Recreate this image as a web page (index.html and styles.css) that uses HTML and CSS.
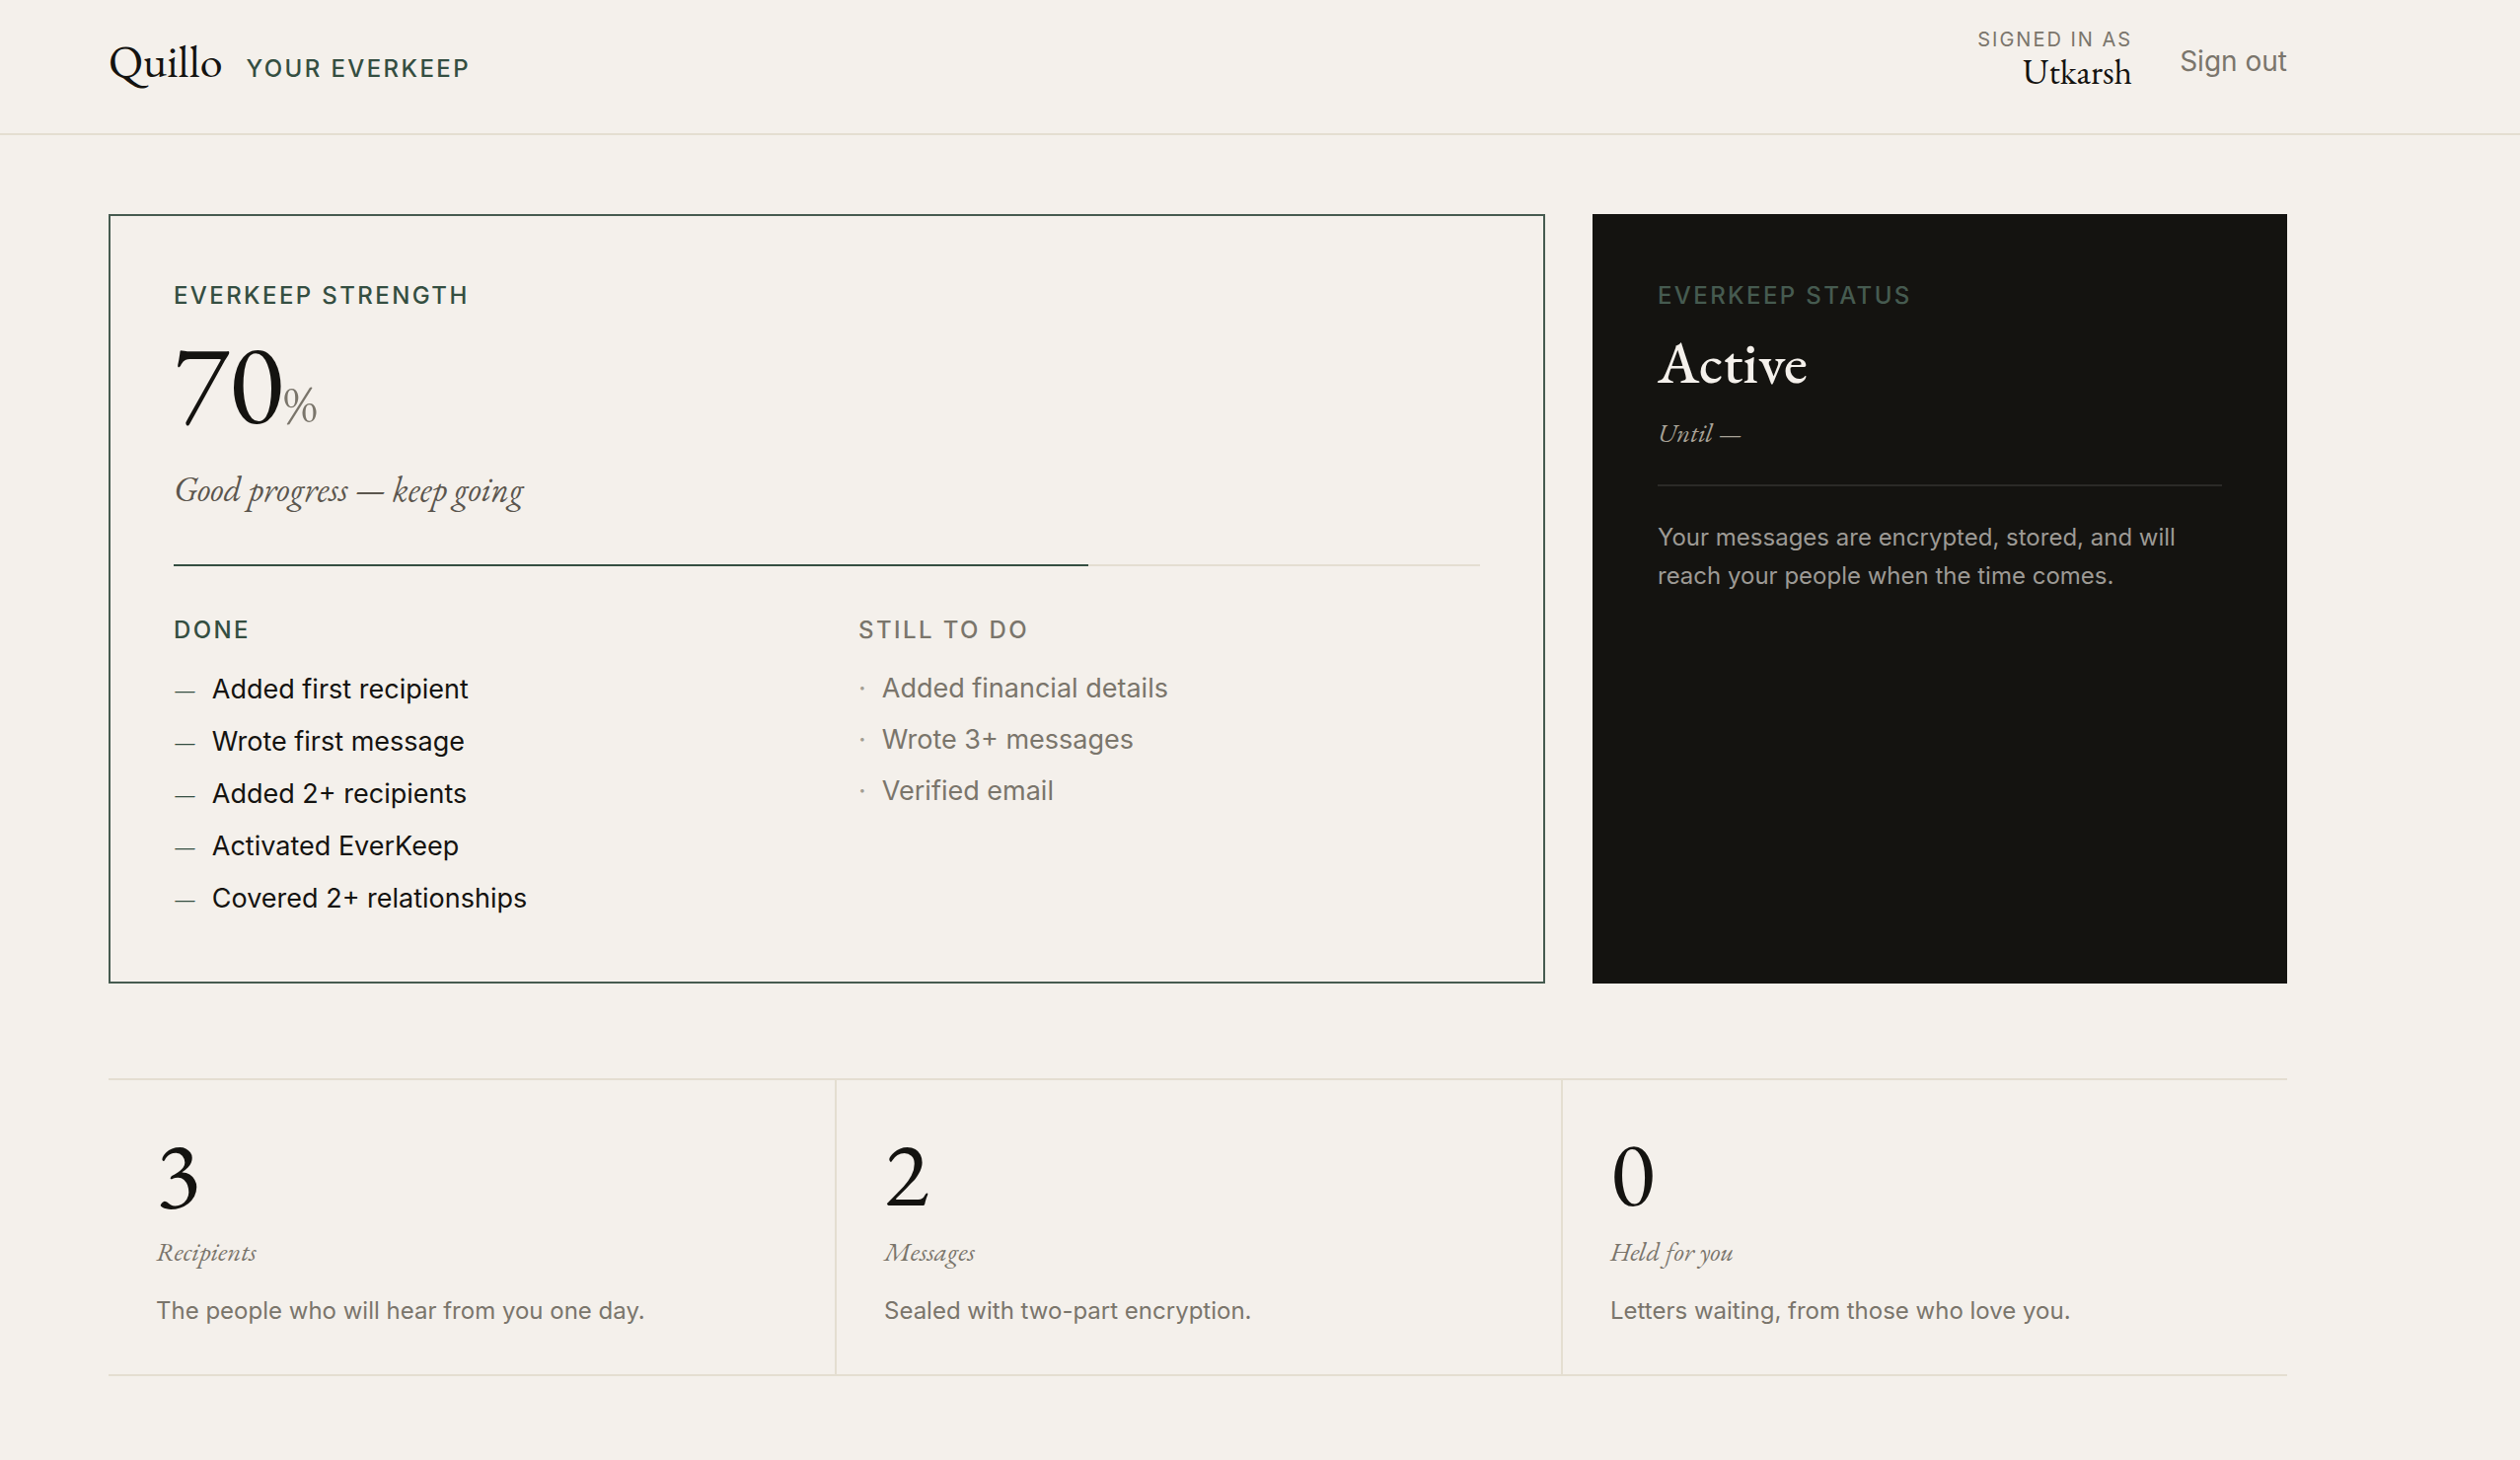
FILE: index.html
```html
<!DOCTYPE html>
<html lang="en">
<head>
    <meta charset="UTF-8">
    <meta name="viewport" content="width=device-width, initial-scale=1.0">
    <title>Quillo - Your EverKeep</title>
    <link rel="stylesheet" href="styles.css">
</head>
<body>
    <header class="site-header">
        <div class="container header-inner">
            <div class="brand">
                <a href="#" class="logo">Quillo</a>
                <span class="label">Your EverKeep</span>
            </div>
            <div class="account">
                <div class="user">
                    <span class="user-caption">Signed in as</span>
                    <span class="user-name">Utkarsh</span>
                </div>
                <button type="button" class="sign-out">Sign out</button>
            </div>
        </div>
    </header>

    <main class="container">
        <div class="overview">
            <section class="card strength">
                <h2 class="label">EverKeep strength</h2>
                <p class="score">70<span class="percent">%</span></p>
                <p class="progress-note">Good progress — keep going</p>
                <div class="bar"><div class="bar-fill" style="width: 70%"></div></div>
                <div class="checklists">
                    <div>
                        <h3 class="label">Done</h3>
                        <ul class="checklist done">
                            <li>Added first recipient</li>
                            <li>Wrote first message</li>
                            <li>Added 2+ recipients</li>
                            <li>Activated EverKeep</li>
                            <li>Covered 2+ relationships</li>
                        </ul>
                    </div>
                    <div>
                        <h3 class="label muted">Still to do</h3>
                        <ul class="checklist todo">
                            <li>Added financial details</li>
                            <li>Wrote 3+ messages</li>
                            <li>Verified email</li>
                        </ul>
                    </div>
                </div>
            </section>

            <section class="card status">
                <h2 class="label">EverKeep status</h2>
                <p class="status-value">Active</p>
                <p class="status-until">Until —</p>
                <p class="status-text">Your messages are encrypted, stored, and will reach your people when the time comes.</p>
            </section>
        </div>

        <section class="stats">
            <div class="stat">
                <p class="stat-number">3</p>
                <h3 class="stat-name">Recipients</h3>
                <p class="stat-text">The people who will hear from you one day.</p>
            </div>
            <div class="stat">
                <p class="stat-number">2</p>
                <h3 class="stat-name">Messages</h3>
                <p class="stat-text">Sealed with two-part encryption.</p>
            </div>
            <div class="stat">
                <p class="stat-number">0</p>
                <h3 class="stat-name">Held for you</h3>
                <p class="stat-text">Letters waiting, from those who love you.</p>
            </div>
        </section>
    </main>
</body>
</html>
```
FILE: styles.css
```css
:root {
    --paper: #f4f0eb;
    --ink: #141310;
    --muted: #7a756b;
    --green: #344e41;
    --line: #e4ded1;
    --serif: "EB Garamond", "Liberation Serif", serif;
    --sans: Inter, "Liberation Sans", sans-serif;
}

* {
    box-sizing: border-box;
}

body {
    margin: 0;
    background-color: var(--paper);
    color: var(--ink);
    font-family: var(--sans);
    font-size: 24px;
}

h2, h3, p, ul {
    margin: 0;
    padding: 0;
    font-weight: 400;
}

.container {
    max-width: 2208px;
    margin: 0 110px;
}

.label {
    color: var(--green);
    font-size: 24px;
    font-weight: 500;
    line-height: 34px;
    letter-spacing: 0.1em;
    text-transform: uppercase;
}

.label.muted {
    color: var(--muted);
}

/* header */
.site-header {
    padding: 25px 0 36px;
    border-bottom: 2px solid var(--line);
}

.header-inner {
    display: flex;
    justify-content: space-between;
    align-items: center;
}

.brand {
    display: flex;
    align-items: baseline;
    gap: 24px;
}

.logo {
    color: var(--ink);
    font-family: var(--serif);
    font-size: 46px;
    text-decoration: none;
}

.account {
    display: flex;
    align-items: center;
    gap: 48px;
}

.user {
    display: flex;
    flex-direction: column;
    padding-bottom: 8px;
    text-align: right;
}

.user-caption {
    color: var(--muted);
    font-size: 20px;
    line-height: 30px;
    letter-spacing: 0.1em;
    text-transform: uppercase;
}

.user-name {
    font-family: var(--serif);
    font-size: 36px;
    line-height: 36px;
}

.sign-out {
    padding: 0;
    border: none;
    background: none;
    color: var(--muted);
    font-family: var(--sans);
    font-size: 28px;
    cursor: pointer;
}

/* overview cards */
.overview {
    display: grid;
    grid-template-columns: repeat(12, 1fr);
    gap: 48px;
    margin-top: 80px;
}

.card {
    padding: 64px;
    border: 2px solid #465b50;
}

.strength {
    grid-column: span 8;
}

.score {
    margin-top: 12px;
    font-family: var(--serif);
    font-size: 116px;
    line-height: 1;
}

.percent {
    color: var(--muted);
    font-size: 52px;
}

.progress-note {
    margin-top: 27px;
    color: #5b564e;
    font-family: var(--serif);
    font-size: 35px;
    font-style: italic;
    line-height: 48px;
}

.bar {
    height: 2px;
    margin: 52px 0 48px;
    background-color: var(--line);
}

.bar-fill {
    height: 100%;
    background-color: var(--green);
}

.checklists {
    display: grid;
    grid-template-columns: 1fr 1fr;
    gap: 64px;
}

.checklist {
    display: flex;
    flex-direction: column;
    gap: 12px;
    margin-top: 22px;
    list-style: none;
    font-size: 27px;
    line-height: 41px;
}

.checklist li {
    display: flex;
    gap: 16px;
}

.done li::before {
    content: "—";
    color: var(--green);
    font-family: var(--serif);
    font-size: 24px;
}

.todo {
    color: var(--muted);
    line-height: 40px;
}

.todo li::before {
    content: "·";
    color: #a39e93;
}

.status {
    grid-column: span 4;
    border-color: var(--ink);
    background-color: var(--ink);
    color: var(--paper);
}

.status .label {
    color: #465b50;
}

.status-value {
    margin-top: 20px;
    font-family: var(--serif);
    font-size: 60px;
    font-weight: 500;
    line-height: 60px;
}

.status-until {
    margin: 24px 0 34px;
    color: #a8a297;
    font-family: var(--serif);
    font-size: 27px;
    font-style: italic;
    line-height: 36px;
}

.status-text {
    padding-top: 32px;
    border-top: 2px solid #2b2a27;
    color: #9d9a95;
    line-height: 39px;
}

/* stats */
.stats {
    display: grid;
    grid-template-columns: repeat(3, 1fr);
    margin: 96px 0 80px;
    border-top: 2px solid var(--line);
    border-bottom: 2px solid var(--line);
}

.stat {
    padding: 48px 48px 46px;
}

.stat + .stat {
    border-left: 2px solid var(--line);
}

.stat-number {
    font-family: var(--serif);
    font-size: 94px;
    line-height: 92px;
}

.stat-name {
    margin: 16px 0 24px;
    color: var(--muted);
    font-family: var(--serif);
    font-size: 27px;
    font-style: italic;
    line-height: 36px;
}

.stat-text {
    color: var(--muted);
    line-height: 36px;
}
```
